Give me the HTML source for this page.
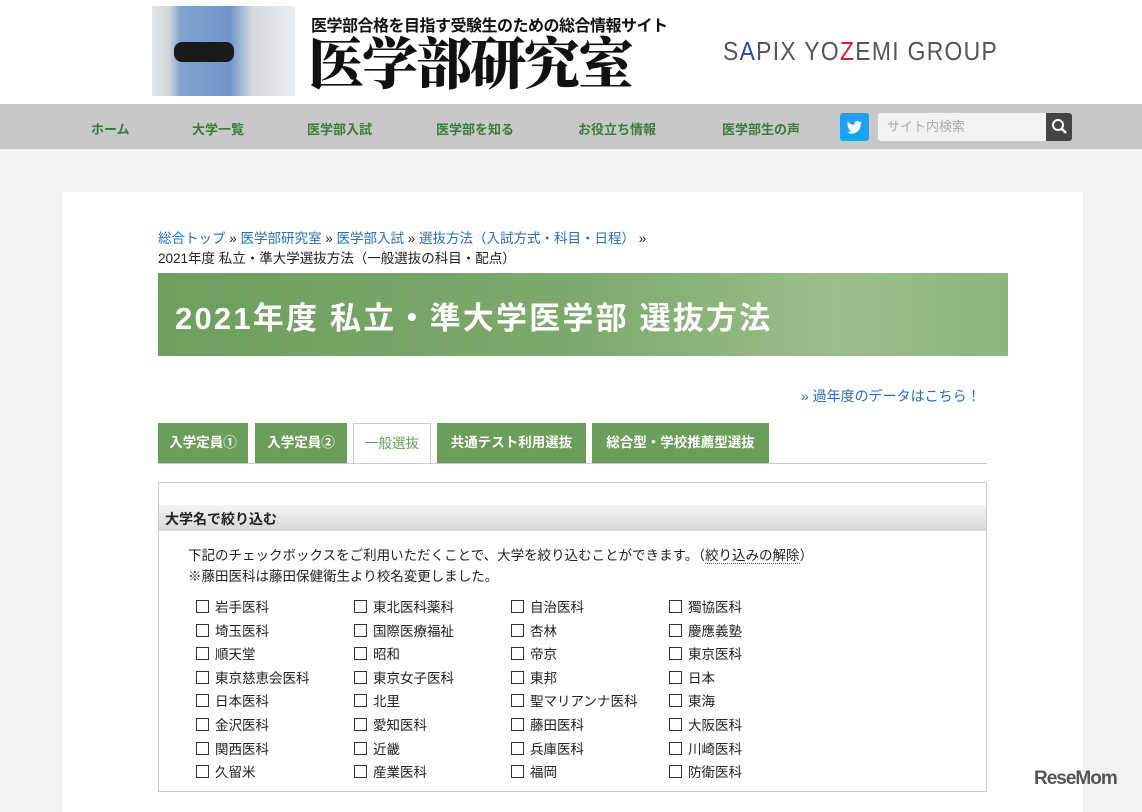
<!DOCTYPE html>
<html><head><meta charset="utf-8"><style>
*{margin:0;padding:0;box-sizing:border-box}
body{width:1142px;height:801px;overflow:hidden;background:#f2f2f2;font-family:"Liberation Sans","Noto Sans CJK JP",sans-serif;color:#222;position:relative}
.hdr{position:absolute;left:0;top:0;width:1142px;height:104px;background:#fff}
.photo{position:absolute;left:152px;top:6px;width:143px;height:90px;background:linear-gradient(90deg,#e4e6ea,#d0d4da 12%,#7fa3d0 20%,#6f96c8 55%,#9db6d6 62%,#d5d9df 70%,#eceef0)}
.photo:after{content:"";position:absolute;left:22px;top:36px;width:60px;height:20px;background:#1a1a1a;border-radius:8px}
.sub{position:absolute;left:311px;top:12px;font-size:16px;font-weight:bold;color:#111;letter-spacing:-0.5px}
.logo{position:absolute;left:308px;top:30px;font-family:"Noto Serif CJK SC",serif;font-size:56px;font-weight:900;color:#111;line-height:62px;letter-spacing:-2px}
.sapix{position:absolute;left:723px;top:36px;font-size:26px;color:#555;letter-spacing:1.5px;transform:scaleX(0.88);transform-origin:left}
.nav{position:absolute;left:0;top:104px;width:1142px;height:45px;background:#c8c8c8}
.nav span{position:absolute;top:15px;font-size:13px;font-weight:bold;color:#3c7a3c}
.tw{position:absolute;left:840px;top:113px;width:29px;height:28px;background:#1da1f2;border-radius:3px}
.srch{position:absolute;left:878px;top:113px;width:168px;height:28px;background:#f2f2f2;border-radius:3px 0 0 3px;color:#aaa;font-size:13px;line-height:28px;padding-left:9px}
.sbtn{position:absolute;left:1046px;top:113px;width:26px;height:28px;background:#444;border-radius:0 3px 3px 0}
.main{position:absolute;left:62px;top:192px;width:1021px;height:620px;background:#fff}
.bc{position:absolute;left:158px;top:229px;font-size:13.5px;line-height:20px;color:#222}
.bc a{color:#2a6fb0;text-decoration:none}
.banner{position:absolute;left:158px;top:273px;width:850px;height:83px;background:linear-gradient(90deg,#6e9f5f,#7ea96c 50%,#9cbf8a 80%,#8cb67a);color:#fff;font-size:31px;font-weight:bold;padding:20px 0 0 17px;letter-spacing:2.2px}
.past{position:absolute;left:801px;top:386px;font-size:14px;color:#2a6fb0}
.tab{position:absolute;top:423px;height:40px;background:#6b9e5a;color:#fff;font-size:13.5px;font-weight:bold;line-height:40px;text-align:center}
.tab.on{background:#fff;color:#6b9e5a;border:1px solid #ccc;border-bottom:none;height:41px;font-weight:normal}
.tline{position:absolute;left:158px;top:463px;width:829px;height:1px;background:#ccc}
.box{position:absolute;left:158px;top:482px;width:829px;height:310px;border:1px solid #ccc}
.bh{position:absolute;left:159px;top:505px;width:827px;height:26px;background:linear-gradient(#f4f4f4,#d8d8d8);font-size:14px;font-weight:bold;padding:4px 0 0 6px}
.desc{position:absolute;left:188px;top:545px;font-size:13.5px;line-height:21px}
.desc u{text-decoration:none;border-bottom:1px dotted #555}
.cb{position:absolute;font-size:13.5px;margin-top:-2px}
.cb:before{content:"";display:inline-block;width:11px;height:11px;border:1px solid #333;margin-right:6px;vertical-align:-1px}
.rm{position:absolute;left:1034px;top:768px;font-size:19px;font-weight:bold;color:#555;letter-spacing:-1px}
</style></head><body>
<div class="hdr"></div>
<div class="photo"></div>
<div class="sub">医学部合格を目指す受験生のための総合情報サイト</div>
<div class="logo">医学部研究室</div>
<div class="sapix">S<span style="color:#2b4a9a">A</span>PIX YO<span style="color:#d0202a">Z</span>EMI GROUP</div>
<div class="nav">
<span style="left:91px">ホーム</span><span style="left:192px">大学一覧</span><span style="left:307px">医学部入試</span><span style="left:436px">医学部を知る</span><span style="left:578px">お役立ち情報</span><span style="left:722px">医学部生の声</span>
</div>
<div class="tw"><svg width="29" height="28" viewBox="0 0 29 28"><path d="M22 9.5c-.6.3-1.2.4-1.8.5.7-.4 1.1-1 1.4-1.7-.6.4-1.3.6-2 .8a3.1 3.1 0 0 0-5.3 2.8c-2.6-.1-4.9-1.4-6.4-3.3-.9 1.5-.4 3.3.9 4.2-.5 0-1-.2-1.4-.4 0 1.5 1.1 2.8 2.5 3.1-.5.1-.9.2-1.4.1.4 1.3 1.6 2.1 2.9 2.2A6.3 6.3 0 0 1 7 19.1 8.8 8.8 0 0 0 20.6 11.3c.6-.5 1.100-1 1.4-1.800z" fill="#fff"/></svg></div>
<div class="srch">サイト内検索</div>
<div class="sbtn"><svg width="26" height="28"><circle cx="12" cy="12" r="5" stroke="#fff" stroke-width="2" fill="none"/><path d="M16 16l4 4" stroke="#fff" stroke-width="2.5"/></svg></div>
<div class="main"></div>
<div class="bc"><a>総合トップ</a> » <a>医学部研究室</a> » <a>医学部入試</a> » <a>選抜方法（入試方式・科目・日程）</a> »<br>2021年度 私立・準大学選抜方法（一般選抜の科目・配点）</div>
<div class="banner">2021年度 私立・準大学医学部 選抜方法</div>
<div class="past">» 過年度のデータはこちら！</div>
<div class="tab" style="left:158px;width:90px">入学定員①</div>
<div class="tab" style="left:255px;width:92px">入学定員②</div>
<div class="tab on" style="left:353px;width:78px">一般選抜</div>
<div class="tab" style="left:437px;width:149px">共通テスト利用選抜</div>
<div class="tab" style="left:592px;width:177px">総合型・学校推薦型選抜</div>
<div class="tline"></div>
<div class="box"></div>
<div class="bh">大学名で絞り込む</div>
<div class="desc">下記のチェックボックスをご利用いただくことで、大学を絞り込むことができます。（<u>絞り込みの解除</u>）<br>※藤田医科は藤田保健衛生より校名変更しました。</div>
<div class="cb" style="left:196px;top:598px">岩手医科</div><div class="cb" style="left:354px;top:598px">東北医科薬科</div><div class="cb" style="left:511px;top:598px">自治医科</div><div class="cb" style="left:669px;top:598px">獨協医科</div>
<div class="cb" style="left:196px;top:622px">埼玉医科</div><div class="cb" style="left:354px;top:622px">国際医療福祉</div><div class="cb" style="left:511px;top:622px">杏林</div><div class="cb" style="left:669px;top:622px">慶應義塾</div>
<div class="cb" style="left:196px;top:645px">順天堂</div><div class="cb" style="left:354px;top:645px">昭和</div><div class="cb" style="left:511px;top:645px">帝京</div><div class="cb" style="left:669px;top:645px">東京医科</div>
<div class="cb" style="left:196px;top:669px">東京慈恵会医科</div><div class="cb" style="left:354px;top:669px">東京女子医科</div><div class="cb" style="left:511px;top:669px">東邦</div><div class="cb" style="left:669px;top:669px">日本</div>
<div class="cb" style="left:196px;top:692px">日本医科</div><div class="cb" style="left:354px;top:692px">北里</div><div class="cb" style="left:511px;top:692px">聖マリアンナ医科</div><div class="cb" style="left:669px;top:692px">東海</div>
<div class="cb" style="left:196px;top:716px">金沢医科</div><div class="cb" style="left:354px;top:716px">愛知医科</div><div class="cb" style="left:511px;top:716px">藤田医科</div><div class="cb" style="left:669px;top:716px">大阪医科</div>
<div class="cb" style="left:196px;top:740px">関西医科</div><div class="cb" style="left:354px;top:740px">近畿</div><div class="cb" style="left:511px;top:740px">兵庫医科</div><div class="cb" style="left:669px;top:740px">川崎医科</div>
<div class="cb" style="left:196px;top:763px">久留米</div><div class="cb" style="left:354px;top:763px">産業医科</div><div class="cb" style="left:511px;top:763px">福岡</div><div class="cb" style="left:669px;top:763px">防衛医科</div>
<div class="rm">ReseMom</div>
</body></html>
